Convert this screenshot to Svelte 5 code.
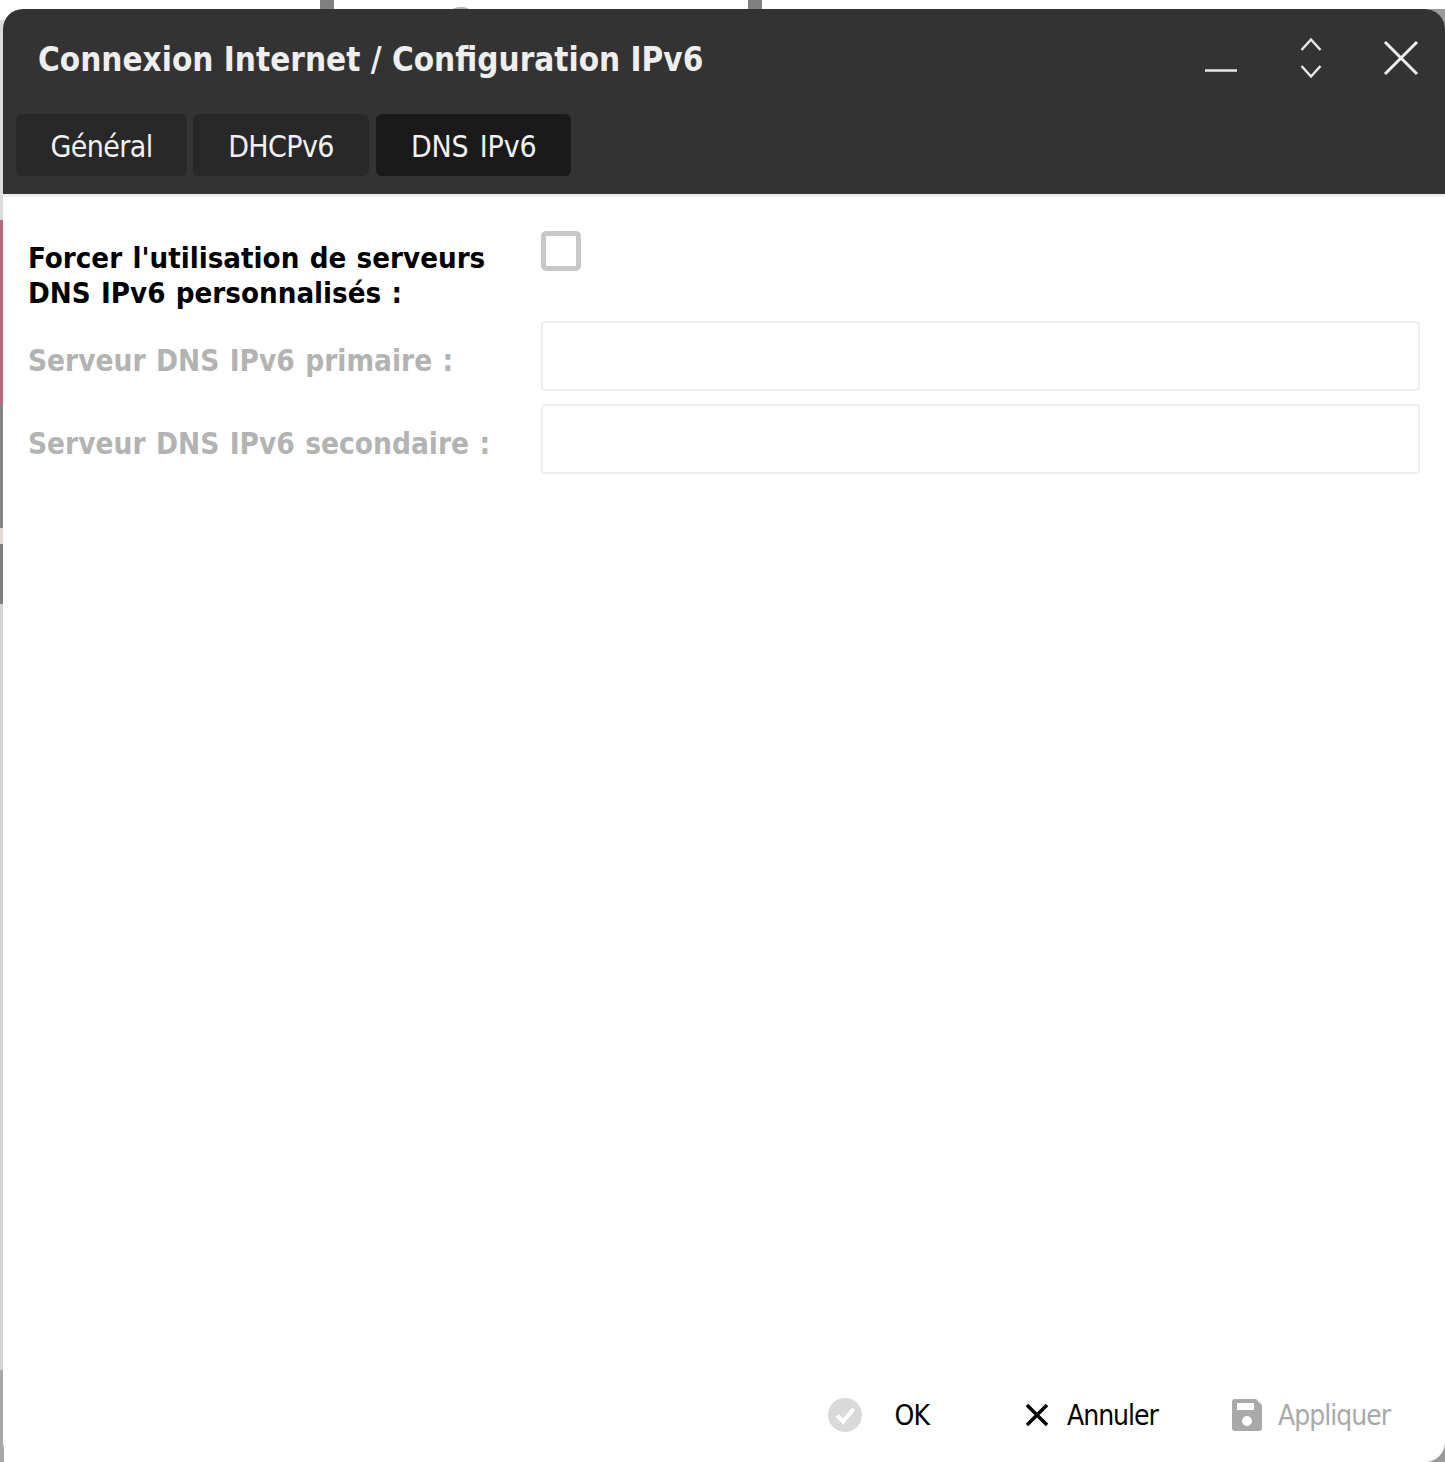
<script>
  const tabs = ['Général', 'DHCPv6', 'DNS IPv6'];
  let active = $state(2);
  let forced = $state(false);

  // bits of the page behind the dialog that stick out on the edges
  const strips = [
    { top: 20, height: 200, color: '#dcdcdc' },
    { top: 220, height: 184, color: '#b8697c' },
    { top: 404, height: 124, color: '#858585' },
    { top: 528, height: 16, color: '#e2dcd0' },
    { top: 544, height: 60, color: '#808080' },
    { top: 604, height: 766, color: '#d4d4d4' },
    { top: 1370, height: 92, color: '#a8a8a8' }
  ];
</script>

<div class="page">
  <div class="behind">
    <span class="bar one"></span>
    <span class="bar two"></span>
    <span class="arc"></span>
    <span class="corner tr"></span>
    <span class="corner br"></span>
    {#each strips as s}
      <span class="strip" style="top: {s.top}px; height: {s.height}px; background: {s.color}"></span>
    {/each}
  </div>

  <div class="dialog">
    <header>
      <div class="titlebar">
        <h1>Connexion Internet / Configuration IPv6</h1>
        <div class="controls">
          <svg width="34" height="34" viewBox="0 0 34 34"><path d="M1 26.500H33" stroke="#e8e8e8" stroke-width="2.500" fill="none" /></svg>
          <svg width="24" height="42" viewBox="0 0 24 42"><path d="M2.500 13 12 2.500 21.500 13M2.500 29 12 39.500 21.500 29" stroke="#e8e8e8" stroke-width="2.500" fill="none" /></svg>
          <svg width="36" height="36" viewBox="0 0 36 36"><path d="M2 2 34 34M34 2 2 34" stroke="#efefef" stroke-width="3" fill="none" /></svg>
        </div>
      </div>
      <nav class="tabs">
        {#each tabs as t, i}
          <button class="tab" class:active={active === i} onclick={() => (active = i)}>{t}</button>
        {/each}
      </nav>
    </header>

    <main>
      <div class="row first">
        <label for="force" class="lbl strong">Forcer l'utilisation de serveurs DNS IPv6 personnalisés :</label>
        <input id="force" type="checkbox" bind:checked={forced} />
      </div>
      <div class="row">
        <label for="dns1" class="lbl">Serveur DNS IPv6 primaire :</label>
        <input id="dns1" type="text" disabled={!forced} />
      </div>
      <div class="row">
        <label for="dns2" class="lbl">Serveur DNS IPv6 secondaire :</label>
        <input id="dns2" type="text" disabled={!forced} />
      </div>
    </main>

    <footer>
      <button class="act ok">
        <svg width="34" height="34" viewBox="0 0 34 34">
          <circle cx="17" cy="17" r="17" fill="#d9d9d9" />
          <path d="M9 17.500 15 23.500 25.500 11" stroke="#fff" stroke-width="4" fill="none" />
        </svg>
        <span>OK</span>
      </button>
      <button class="act cancel">
        <svg width="24" height="24" viewBox="0 0 24 24"><path d="M2 2 22 22M22 2 2 22" stroke="#000" stroke-width="3.500" fill="none" /></svg>
        <span>Annuler</span>
      </button>
      <button class="act apply">
        <svg width="30" height="32" viewBox="0 0 30 32">
          <path fill-rule="evenodd" fill="#a9a9a9" d="M3 0H24L30 6V29A3 3 0 0 1 27 32H3A3 3 0 0 1 0 29V3A3 3 0 0 1 3 0ZM5 4V11H22V4ZM15 17A5 5 0 1 0 15 27 5 5 0 0 0 15 17Z" />
        </svg>
        <span>Appliquer</span>
      </button>
    </footer>
  </div>
</div>

<style>
  :global(body) {
    margin: 0;
    background: #fff;
  }

  .page {
    position: relative;
    width: 1445px;
    height: 1462px;
    overflow: hidden;
    padding: 9px 0 0 3px;
    box-sizing: border-box;
    font-family: "DejaVu Sans Condensed", "DejaVu Sans", sans-serif;
    font-stretch: condensed;
  }

  .behind {
    position: absolute;
    inset: 0;
    background: #fff;
  }

  .strip {
    position: absolute;
    left: 0;
    width: 4px;
  }

  .bar {
    position: absolute;
    top: 0;
    width: 14px;
    height: 10px;
    background: #808080;
  }
  .bar.one { left: 320px; }
  .bar.two { left: 748px; }

  .arc {
    position: absolute;
    left: 452px;
    top: 7px;
    width: 18px;
    height: 6px;
    border-radius: 50%;
    background: #b5b5b5;
  }

  .corner {
    position: absolute;
    right: 0;
    width: 24px;
    height: 24px;
    background: #9a9a9a;
  }
  .corner.tr { top: 9px; }
  .corner.br { bottom: 0; }

  .dialog {
    position: relative;
    height: 1453px;
    display: flex;
    flex-direction: column;
    background: #fff;
    border-radius: 20px;
    overflow: hidden;
  }

  header {
    background: #333;
    height: 185px;
    flex: none;
  }

  .titlebar {
    display: flex;
    justify-content: space-between;
    height: 105px;
    padding: 0 26px 0 35px;
  }

  h1 {
    margin: 32px 0 0;
    font-size: 33px;
    line-height: 38px;
    font-weight: 700;
    color: #eee;
    white-space: nowrap;
  }

  .controls {
    display: flex;
    align-items: flex-start;
    gap: 62px;
    padding-top: 31px;
  }
  .controls svg { display: block; }
  .controls svg:nth-child(1) { margin-top: 4px; margin-left: 1px; margin-right: -1px; }
  .controls svg:nth-child(2) { margin-top: -3px; }
  .controls svg:nth-child(3) { margin-top: 0; margin-left: -2px; }

  .tabs {
    display: flex;
    gap: 6px;
    padding-left: 13px;
  }

  .tab {
    height: 62px;
    padding: 2px 34.500px 0;
    border: 0;
    border-radius: 6px;
    background: #282828;
    color: #f2f2f2;
    font: 400 30px "DejaVu Sans Condensed", "DejaVu Sans", sans-serif;
    font-stretch: condensed;
    letter-spacing: -0.6px;
    cursor: pointer;
  }
  .tab:nth-child(2) { padding: 2px 35px 0; }
  .tab:nth-child(3) {
    margin-left: 1px;
    padding: 2px 35px 0;
    letter-spacing: -0.2px;
    word-spacing: 3px;
  }
  .tab.active { background: #1a1a1a; }

  main {
    flex: 1;
    border-top: 3px solid #eee;
    padding: 34px 25px 0;
    display: flex;
    flex-direction: column;
    gap: 13px;
  }

  .row {
    display: flex;
    height: 70px;
    align-items: center;
  }
  .row.first {
    height: 74px;
    align-items: flex-start;
    margin-bottom: 3px;
  }

  .lbl {
    width: 513px;
    flex: none;
    font-size: 29.500px;
    line-height: 35px;
    font-weight: 700;
    color: #b3b3b3;
    padding-top: 10px;
    word-spacing: 1.200px;
    box-sizing: border-box;
  }
  .lbl.strong {
    color: #000;
    font-size: 29.200px;
    padding-top: 10px;
    padding-right: 20px;
  }

  input[type="checkbox"] {
    appearance: none;
    margin: 0;
    width: 40px;
    height: 40px;
    box-sizing: border-box;
    border: 5px solid #c8c8c8;
    border-radius: 5px;
    background: #fff;
  }

  input[type="text"] {
    flex: 1;
    height: 70px;
    box-sizing: border-box;
    border: 2px solid #efefef;
    border-radius: 4px;
    background: #fff;
    outline: none;
  }

  footer {
    flex: none;
    height: 69px;
    display: flex;
    align-items: flex-start;
    padding: 0 55px 0 0;
    justify-content: flex-end;
  }

  .act {
    display: flex;
    align-items: center;
    border: 0;
    padding: 0;
    background: none;
    font: 400 28px "DejaVu Sans Condensed", "DejaVu Sans", sans-serif;
    font-stretch: condensed;
    letter-spacing: -1px;
    color: #000;
    height: 44px;
  }
  .ok { gap: 33px; margin-right: 96px; }
  .cancel { gap: 18px; margin-right: 74px; }
  .apply { gap: 16px; color: #a9a9a9; }
</style>
